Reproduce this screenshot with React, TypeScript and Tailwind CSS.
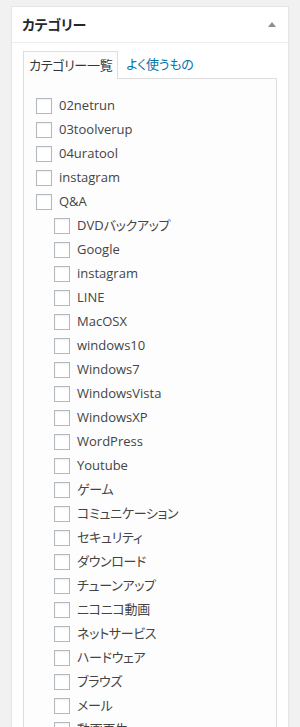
import React from 'react'

const top = ['02netrun', '03toolverup', '04uratool', 'instagram', 'Q&A']
const children = [
  'DVDバックアップ',
  'Google',
  'instagram',
  'LINE',
  'MacOSX',
  'windows10',
  'Windows7',
  'WindowsVista',
  'WindowsXP',
  'WordPress',
  'Youtube',
  'ゲーム',
  'コミュニケーション',
  'セキュリティ',
  'ダウンロード',
  'チューンアップ',
  'ニコニコ動画',
  'ネットサービス',
  'ハードウェア',
  'ブラウズ',
  'メール',
  '動画再生',
]

const font = { fontFamily: '"Open Sans", "Noto Sans CJK JP", sans-serif' }

// kana/kanji runs get proportional widths, like the narrow Meiryo in the shot
function Label({ text }: { text: string }) {
  const parts = text.match(/[\u3000-\u9fff\uff00-\uffef]+|[^\u3000-\u9fff\uff00-\uffef]+/g) ?? []
  return (
    <>
      {parts.map((p, i) =>
        /[\u3000-\u9fff]/.test(p) ? (
          <span key={i} className="[font-feature-settings:'palt'] tracking-[-0.3px]">
            {p}
          </span>
        ) : (
          <span key={i}>{p}</span>
        ),
      )}
    </>
  )
}

function Row({ label, child }: { label: string; child?: boolean }) {
  return (
    <li className={`flex h-6 items-center gap-[7px] ${child ? 'pl-[30px]' : 'pl-3'}`}>
      <span className="h-4 w-4 shrink-0 border border-[#b4b9be] bg-white shadow-[inset_0_1px_2px_rgba(0,0,0,0.07)]" />
      <span className="text-[13px] text-[#444]">
        <Label text={label} />
      </span>
    </li>
  )
}

export default function App() {
  return (
    <div className="min-h-screen bg-[#f1f1f1] px-[11px] pt-[6px]" style={font}>
      <div className="border border-[#e5e5e5] bg-white shadow-[0_1px_1px_rgba(0,0,0,0.04)]">
        <div className="flex h-[36px] items-center justify-between border-b border-[#eee] pl-[10px] pr-[12px]">
          <h2 className="text-[14px] font-bold text-[#23282d]">
            <Label text="カテゴリー" />
          </h2>
          <span className="mt-[-1px] h-0 w-0 border-x-[4px] border-b-[5px] border-x-transparent border-b-[#8c8f94]" />
        </div>
        <div className="px-[11px] pb-3 pt-[8px]">
          <div className="flex items-end">
            <div className="relative z-10 mb-[-1px] flex h-[28px] items-center border border-b-0 border-[#ddd] bg-[#fdfdfd] px-[5px] text-[13px] text-[#32373c]">
              <Label text="カテゴリー一覧" />
            </div>
            <div className="flex h-[27px] items-center px-[8px] text-[13px] text-[#0073aa]">
              <Label text="よく使うもの" />
            </div>
          </div>
          <div className="border border-[#ddd] bg-[#fdfdfd] pt-[15px] pb-2">
            <ul>
              {top.map((t) => (
                <Row key={t} label={t} />
              ))}
              {children.map((t, i) => (
                <Row key={t + i} label={t} child />
              ))}
            </ul>
          </div>
        </div>
      </div>
    </div>
  )
}
